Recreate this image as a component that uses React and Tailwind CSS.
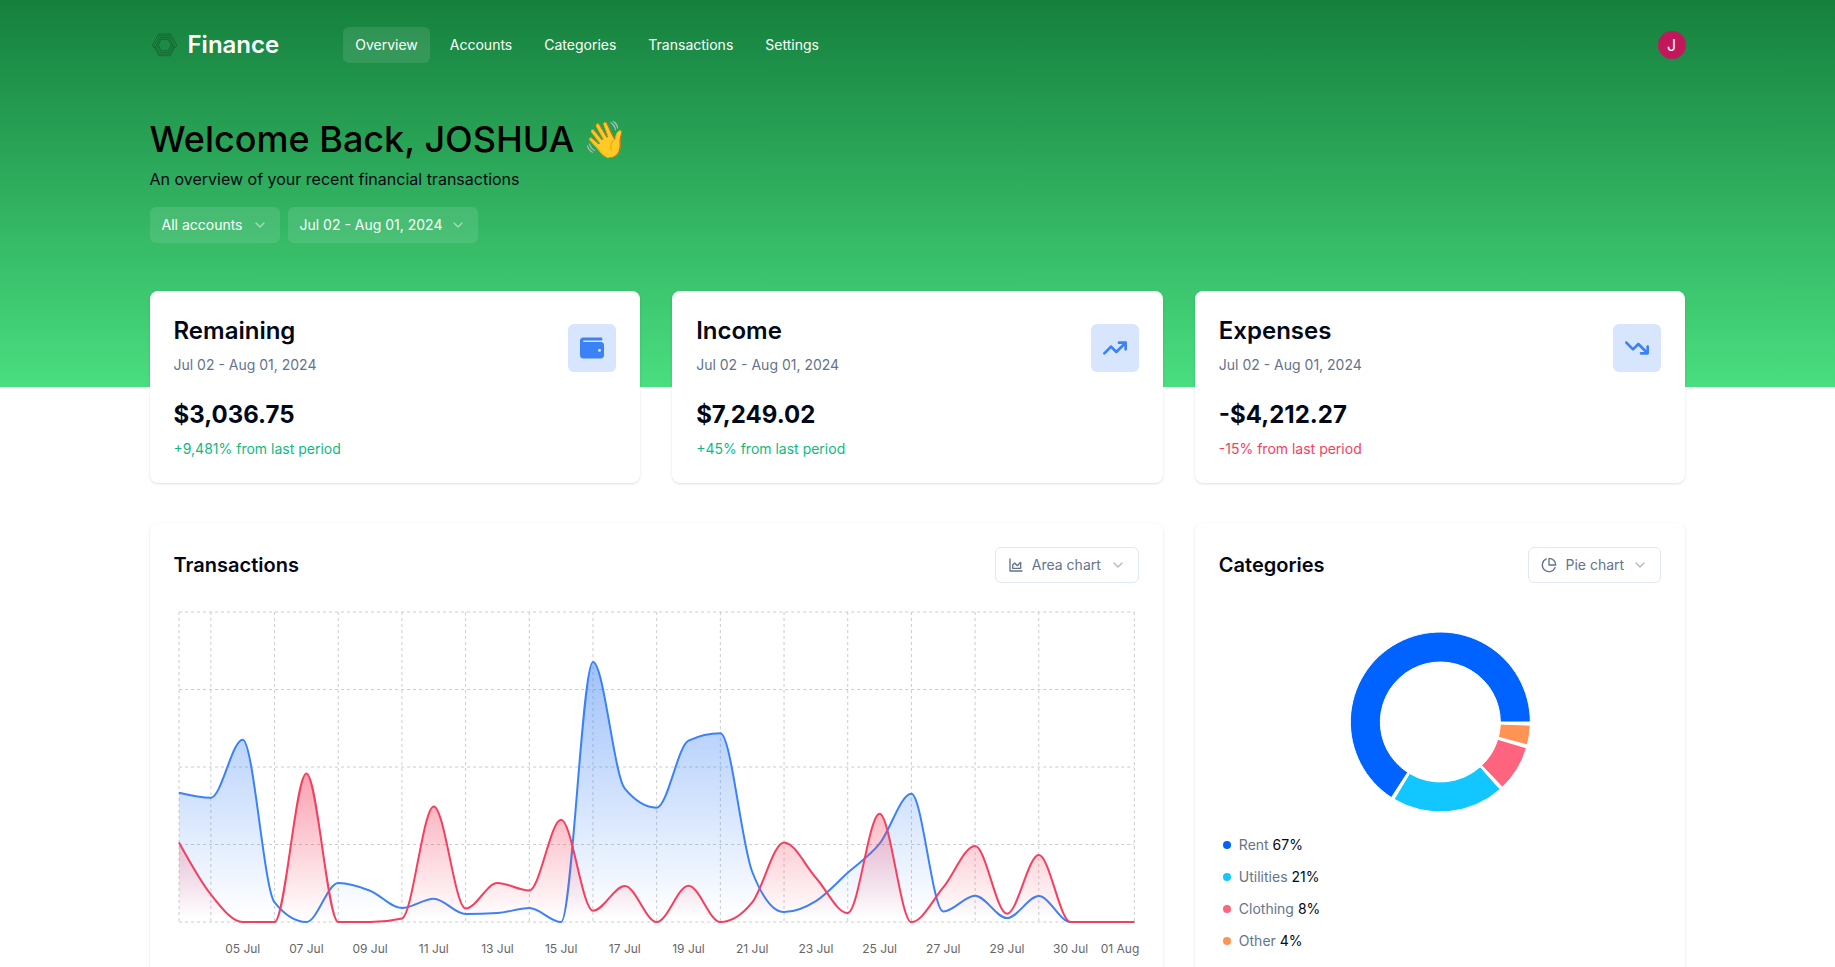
import React from "react";
import { ChevronDown } from "lucide-react";
import { FaWallet, FaArrowTrendUp, FaArrowTrendDown } from "react-icons/fa6";

const NAV = ["Overview", "Accounts", "Categories", "Transactions", "Settings"];

const SUMMARY = [
  { title: "Remaining", amount: "$3,036.75", change: "+9,481% from last period", up: true, Icon: FaWallet },
  { title: "Income", amount: "$7,249.02", change: "+45% from last period", up: true, Icon: FaArrowTrendUp },
  { title: "Expenses", amount: "-$4,212.27", change: "-15% from last period", up: false, Icon: FaArrowTrendDown },
];

const PERIOD = "Jul 02 - Aug 01, 2024";

// Daily totals as a share of the vertical axis (0 to 930).
const INCOME = [388, 373, 547, 59, 0, 117, 94, 42, 70, 24, 27, 42, 0, 780, 400, 343, 544, 566, 151, 30, 63, 148, 235, 385, 32, 79, 12, 78, 0, 0, 0];
const EXPENSES = [239, 83, 0, 0, 446, 0, 0, 11, 347, 41, 117, 95, 307, 34, 108, 0, 109, 0, 59, 239, 133, 27, 325, 0, 104, 228, 25, 201, 0, 0, 0];
const AXIS_MAX = 930;

const CHART = { width: 965, height: 350, left: 5, right: 960, top: 5, bottom: 315 };
const STEP = (CHART.right - CHART.left) / 30;
const xAt = (i) => CHART.left + i * STEP;
const yAt = (v) => CHART.bottom - (v / AXIS_MAX) * (CHART.bottom - CHART.top);

const GRID_X = [0, 1, 3, 5, 7, 9, 11, 13, 15, 17, 19, 21, 23, 25, 27, 30];
const GRID_Y = [0, 1, 2, 3, 4];
const LABELS = ["05 Jul", "07 Jul", "09 Jul", "11 Jul", "13 Jul", "15 Jul", "17 Jul", "19 Jul", "21 Jul", "23 Jul", "25 Jul", "27 Jul", "29 Jul", "30 Jul"];

// Monotone cubic interpolation through evenly spaced points.
function monotonePath(values) {
  const pts = values.map((v, i) => [xAt(i), yAt(v)]);
  const slopes = pts.slice(1).map((p, i) => (p[1] - pts[i][1]) / STEP);
  const n = pts.length;
  const t = new Array(n).fill(0);
  for (let i = 1; i < n - 1; i++) {
    const a = slopes[i - 1];
    const b = slopes[i];
    t[i] = (Math.sign(a) + Math.sign(b)) * Math.min(Math.abs(a), Math.abs(b), 0.5 * Math.abs((a + b) / 2)) || 0;
  }
  t[0] = (3 * slopes[0] - t[1]) / 2;
  t[n - 1] = (3 * slopes[n - 2] - t[n - 2]) / 2;
  let d = `M${pts[0][0]},${pts[0][1]}`;
  for (let i = 0; i < n - 1; i++) {
    const h = STEP / 3;
    d += `C${pts[i][0] + h},${pts[i][1] + h * t[i]},${pts[i + 1][0] - h},${pts[i + 1][1] - h * t[i + 1]},${pts[i + 1][0]},${pts[i + 1][1]}`;
  }
  return d;
}

const closeArea = (d) => `${d}L${CHART.right},${CHART.bottom}L${CHART.left},${CHART.bottom}Z`;

const CATEGORIES = [
  { name: "Rent", share: "67%", color: "#0062ff", from: 0, to: 237.1 },
  { name: "Utilities", share: "21%", color: "#12c6ff", from: 239.1, to: 311.6 },
  { name: "Clothing", share: "8%", color: "#ff647f", from: 313.6, to: 343.25 },
  { name: "Other", share: "4%", color: "#ff9354", from: 345.25, to: 358 },
];

function sectorPath(cx, cy, inner, outer, from, to) {
  const p = (r, deg) => {
    const a = (deg * Math.PI) / 180;
    return `${cx + r * Math.cos(a)},${cy - r * Math.sin(a)}`;
  };
  const large = to - from > 180 ? 1 : 0;
  return `M${p(outer, from)}A${outer},${outer},0,${large},0,${p(outer, to)}L${p(inner, to)}A${inner},${inner},0,${large},1,${p(inner, from)}Z`;
}

function Logo() {
  return (
    <svg className="size-7" viewBox="0 0 28 28" fill="none" stroke="#0b3d20" strokeOpacity="0.6" strokeWidth="0.7" strokeLinejoin="round" aria-hidden="true">
      <path d="M5.6 16.2H3.4L2.2 14.2 8.6 3H20.8L27 14.2 25.8 16.2H23.6L18.9 6.6H10.6Z" />
      <path d="M4 15 9.6 4.8H19.8L25.2 15" />
      <path d="M4.6 16.2 8.8 24.7H20.4L24.6 16.2" />
      <path d="M5.6 16.2 9.6 23.2H19.6L23.6 16.2" />
      <path d="M7 14.2 10.6 21.5H18.8L22.4 14.2" />
      <path d="M11.2 8.4H18.2L21.2 14 18.2 19.7H11.2L8.2 14Z" />
    </svg>
  );
}

function AreaIcon() {
  return (
    <svg className="size-4" viewBox="0 0 24 24" fill="none" stroke="currentColor" strokeWidth="2" strokeLinecap="round" strokeLinejoin="round" aria-hidden="true">
      <path d="M3 3v18h18" />
      <path d="M7 12v5h12V8l-5 5-4-4Z" />
    </svg>
  );
}

function PieIcon() {
  return (
    <svg className="size-4" viewBox="0 0 24 24" fill="none" stroke="currentColor" strokeWidth="2" strokeLinecap="round" strokeLinejoin="round" aria-hidden="true">
      <path d="M21.21 15.89A10 10 0 1 1 8 2.83" />
      <path d="M22 12A10 10 0 0 0 12 2v10z" />
    </svg>
  );
}

function ChartSelect({ id, label, value, icon }) {
  return (
    <div className="relative flex h-9 items-center rounded-md border border-[#e2e8f0] text-[#64748b]">
      <span className="pointer-events-none absolute left-3">{icon}</span>
      <select id={id} aria-label={label} defaultValue={value} className="h-full appearance-none bg-transparent pl-9 pr-9 text-sm">
        <option>{value}</option>
      </select>
      <ChevronDown className="pointer-events-none absolute right-3 size-4 opacity-50" />
    </div>
  );
}

function SummaryCard({ title, amount, change, up, Icon }) {
  return (
    <article className="rounded-lg bg-white p-6 shadow-sm">
      <div className="flex items-center justify-between gap-4">
        <div>
          <h2 className="text-2xl font-semibold">{title}</h2>
          <p className="mt-2 text-sm text-[#64748b]">{PERIOD}</p>
        </div>
        <div className="mt-1.5 shrink-0 rounded-md bg-[#3b82f6]/20 p-3 text-[#3b82f6]">
          <Icon className="size-6" />
        </div>
      </div>
      <p className="mt-6 text-2xl font-bold">{amount}</p>
      <p className={up ? "mt-2 text-sm text-[#10b981]" : "mt-2 text-sm text-[#f43f5e]"}>{change}</p>
    </article>
  );
}

function AreaSeries({ values, color, gradient }) {
  const line = monotonePath(values);
  return (
    <g>
      <path d={closeArea(line)} fill={`url(#${gradient})`} fillOpacity="0.6" />
      <path d={line} fill="none" stroke={color} strokeWidth="2" />
    </g>
  );
}

function TransactionsChart() {
  return (
    <svg className="h-auto w-full" viewBox={`0 0 ${CHART.width} ${CHART.height}`} role="img" aria-label="Transactions">
      <defs>
        <linearGradient id="income" x1="0" y1="0" x2="0" y2="1">
          <stop offset="2%" stopColor="#3b82f6" stopOpacity="0.8" />
          <stop offset="98%" stopColor="#3b82f6" stopOpacity="0" />
        </linearGradient>
        <linearGradient id="expenses" x1="0" y1="0" x2="0" y2="1">
          <stop offset="2%" stopColor="#f43f5e" stopOpacity="0.8" />
          <stop offset="98%" stopColor="#f43f5e" stopOpacity="0" />
        </linearGradient>
      </defs>
      <g stroke="#ccc" strokeDasharray="3 3">
        {GRID_Y.map((i) => {
          const y = CHART.top + (i * (CHART.bottom - CHART.top)) / 4;
          return <line key={i} x1={CHART.left} x2={CHART.right} y1={y} y2={y} />;
        })}
        {GRID_X.map((i) => (
          <line key={i} x1={xAt(i)} x2={xAt(i)} y1={CHART.top} y2={CHART.bottom} />
        ))}
      </g>
      <AreaSeries values={INCOME} color="#3b82f6" gradient="income" />
      <AreaSeries values={EXPENSES} color="#f43f5e" gradient="expenses" />
      <g fill="#666" fontSize="12" textAnchor="middle">
        {LABELS.map((text, i) => (
          <text key={text} x={xAt(2 + i * 2)} y="346">
            {text}
          </text>
        ))}
        <text x="965" y="346" textAnchor="end">
          01 Aug
        </text>
      </g>
    </svg>
  );
}

export default function App() {
  return (
    <div className="font-[Inter,'Noto_Color_Emoji',sans-serif] text-[#020817]">
      <header className="bg-[linear-gradient(to_bottom,#15803d,#4ade80)] px-14 pb-36 pt-[27px]">
        <div className="mx-auto max-w-[1536px]">
          <div className="mb-14 flex h-9 items-center justify-between">
            <div className="flex items-center gap-16">
              <a href="#home" className="flex items-center gap-2.5 text-2xl font-semibold text-white">
                <Logo />
                Finance
              </a>
              <nav className="flex items-center gap-2">
                {NAV.map((item, i) => (
                  <a
                    key={item}
                    href={`#${item.toLowerCase()}`}
                    className={
                      i === 0
                        ? "flex h-9 items-center rounded-md bg-white/10 px-3 text-sm text-white"
                        : "flex h-9 items-center rounded-md px-3 text-sm text-white"
                    }
                  >
                    {item}
                  </a>
                ))}
              </nav>
            </div>
            <button type="button" aria-label="Account menu" className="flex size-7 items-center justify-center rounded-full bg-[#c2185b] text-base text-white">
              J
            </button>
          </div>
          <h1 className="text-4xl font-medium text-black">Welcome Back, JOSHUA 👋</h1>
          <p className="mt-2 text-base">An overview of your recent financial transactions</p>
          <div className="mt-4 flex items-center gap-2 text-sm text-white">
            <div className="relative flex h-9 items-center rounded-md bg-white/10">
              <select aria-label="Account" defaultValue="All accounts" className="h-full appearance-none bg-transparent pl-3 pr-9 text-sm">
                <option>All accounts</option>
              </select>
              <ChevronDown className="pointer-events-none absolute right-3 size-4 opacity-50" />
            </div>
            <button type="button" className="flex h-9 items-center gap-2 rounded-md bg-white/10 px-3">
              {PERIOD}
              <ChevronDown className="size-4 opacity-50" />
            </button>
          </div>
        </div>
      </header>

      <main className="mx-auto -mt-24 max-w-[1536px] pb-10">
        <section className="mb-10 grid grid-cols-3 gap-8">
          {SUMMARY.map((card) => (
            <SummaryCard key={card.title} {...card} />
          ))}
        </section>

        <section className="grid grid-cols-3 gap-8">
          <article className="col-span-2 rounded-lg bg-white p-6 shadow-sm">
            <div className="mb-6 flex items-center justify-between">
              <h2 className="text-xl font-semibold">Transactions</h2>
              <ChartSelect id="transactions-chart" label="Transactions chart type" value="Area chart" icon={<AreaIcon />} />
            </div>
            <TransactionsChart />
          </article>

          <article className="rounded-lg bg-white p-6 shadow-sm">
            <div className="mb-6 flex items-center justify-between">
              <h2 className="text-xl font-semibold">Categories</h2>
              <ChartSelect id="categories-chart" label="Categories chart type" value="Pie chart" icon={<PieIcon />} />
            </div>
            <svg className="mx-auto block h-[226px] w-full" viewBox="0 0 200 226" role="img" aria-label="Spending by category">
              {CATEGORIES.map((c) => (
                <path key={c.name} d={sectorPath(100, 115, 60, 90, c.from, c.to)} fill={c.color} stroke="#fff" />
              ))}
            </svg>
            <ul className="flex flex-col gap-2 px-1">
              {CATEGORIES.map((c) => (
                <li key={c.name} className="flex h-6 items-center gap-2 text-sm">
                  <span className="size-2 rounded-full" style={{ backgroundColor: c.color }} />
                  <span>
                    <span className="text-[#64748b]">{c.name}</span> {c.share}
                  </span>
                </li>
              ))}
            </ul>
          </article>
        </section>
      </main>
    </div>
  );
}
